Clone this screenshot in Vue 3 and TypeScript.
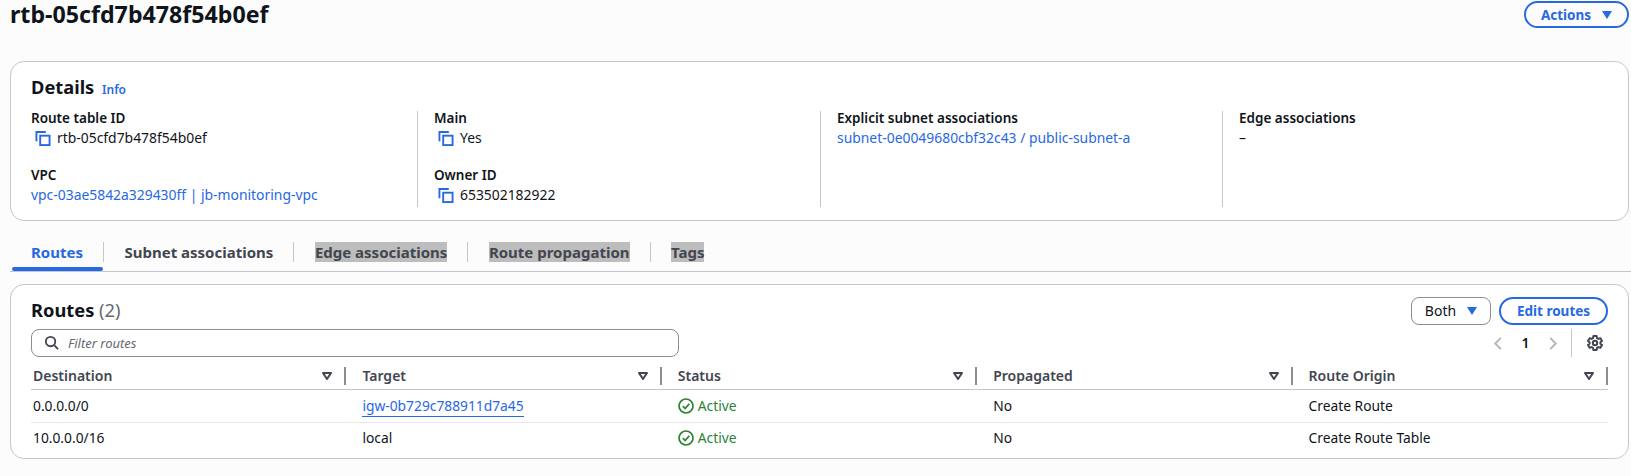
<script setup lang="ts">
type Field = { label: string; value: string; copy?: boolean; link?: boolean }

const detail_cols: Field[][] = [
    [
        { label: 'Route table ID', value: 'rtb-05cfd7b478f54b0ef', copy: true },
        { label: 'VPC', value: 'vpc-03ae5842a329430ff | jb-monitoring-vpc', link: true },
    ],
    [
        { label: 'Main', value: 'Yes', copy: true },
        { label: 'Owner ID', value: '653502182922', copy: true },
    ],
    [{ label: 'Explicit subnet associations', value: 'subnet-0e0049680cbf32c43 / public-subnet-a', link: true }],
    [{ label: 'Edge associations', value: '–' }],
]

const tabs = [
    { name: 'Routes', active: true },
    { name: 'Subnet associations' },
    { name: 'Edge associations', marked: true },
    { name: 'Route propagation', marked: true },
    { name: 'Tags', marked: true },
]

const columns = ['Destination', 'Target', 'Status', 'Propagated', 'Route Origin']

const rows = [
    { dest: '0.0.0.0/0', target: 'igw-0b729c788911d7a45', link: true, origin: 'Create Route' },
    { dest: '10.0.0.0/16', target: 'local', link: false, origin: 'Create Route Table' },
]
</script>

<template>
    <div id="page">
        <header class="head">
            <h1>rtb-05cfd7b478f54b0ef</h1>
            <button class="btn actions">Actions <span class="caret"></span></button>
        </header>

        <section class="card details">
            <h2>Details <a class="info">Info</a></h2>
            <div class="detail-grid">
                <div v-for="(col, i) in detail_cols" :key="i" class="detail-col">
                    <div v-for="field in col" :key="field.label" class="field">
                        <div class="label">{{ field.label }}</div>
                        <div class="value" :class="{ link: field.link }">
                            <svg v-if="field.copy" class="copy" viewBox="0 0 16 16" fill="none" stroke="currentColor" stroke-width="2">
                                <path d="M1 11V1h10" />
                                <rect x="5" y="5" width="10" height="10" />
                            </svg>
                            {{ field.value }}
                        </div>
                    </div>
                </div>
            </div>
        </section>

        <nav class="tabs">
            <div v-for="tab in tabs" :key="tab.name" class="tab" :class="{ active: tab.active }">
                <span :class="{ marked: tab.marked }">{{ tab.name }}</span>
            </div>
        </nav>

        <section class="card routes">
            <div class="routes-top">
                <div class="routes-left">
                    <h2>Routes <span class="count">(2)</span></h2>
                    <div class="filter">
                        <svg class="search" viewBox="0 0 16 16" fill="none" stroke="currentColor" stroke-width="2">
                            <circle cx="7" cy="7" r="5" />
                            <path d="M11 11l4 4" />
                        </svg>
                        <span>Filter routes</span>
                    </div>
                </div>
                <div class="routes-right">
                    <div class="buttons">
                        <button class="btn both">Both <span class="caret"></span></button>
                        <button class="btn edit">Edit routes</button>
                    </div>
                    <div class="pager">
                        <svg class="chev" viewBox="0 0 10 16" fill="none" stroke="currentColor" stroke-width="2"><path d="M8 2L2 8l6 6" /></svg>
                        <span class="page-num">1</span>
                        <svg class="chev" viewBox="0 0 10 16" fill="none" stroke="currentColor" stroke-width="2"><path d="M2 2l6 6-6 6" /></svg>
                        <div class="gear-wrap">
                            <svg class="gear" viewBox="0 0 16 16" fill="none" stroke="currentColor" stroke-width="2" stroke-linejoin="round">
                                <path d="M6.4 1h3.2l.4 2.1 1.4.8 2-.7 1.6 2.8-1.6 1.3v1.4l1.6 1.3-1.6 2.8-2-.7-1.4.8-.4 2.1H6.4L6 12.9l-1.4-.8-2 .7L1 10l1.6-1.3V7.3L1 6l1.6-2.8 2 .7L6 3.1z" />
                                <circle cx="8" cy="8" r="2.2" />
                            </svg>
                        </div>
                    </div>
                </div>
            </div>

            <div class="table">
                <div class="tr th">
                    <div v-for="col in columns" :key="col" class="cell">
                        {{ col }}
                        <svg class="sort" viewBox="0 0 10 8" fill="none" stroke="currentColor" stroke-width="2" stroke-linejoin="round">
                            <path d="M1 1h8L5 7z" />
                        </svg>
                    </div>
                </div>
                <div v-for="row in rows" :key="row.dest" class="tr td">
                    <div class="cell">{{ row.dest }}</div>
                    <div class="cell"><a v-if="row.link" class="under">{{ row.target }}</a><template v-else>{{ row.target }}</template></div>
                    <div class="cell status">
                        <svg class="ok" viewBox="0 0 16 16" fill="none" stroke="currentColor" stroke-width="1.7">
                            <circle cx="8" cy="8" r="7" />
                            <path d="M4.8 8.2l2.3 2.3 4.2-4.6" />
                        </svg>
                        Active
                    </div>
                    <div class="cell">No</div>
                    <div class="cell">{{ row.origin }}</div>
                </div>
            </div>
        </section>
    </div>
</template>

<style>
html, body {
    background: #fcfcfc;
}
</style>

<style scoped>
#page {
    width: 1631px;
    height: 476px;
    overflow: hidden;
    box-sizing: border-box;
    padding: 0 2px 0 10px;
    font-family: "Noto Sans", sans-serif;
    font-size: 14px;
    line-height: 20px;
    color: #0f141a;
}

.head {
    display: flex;
    justify-content: space-between;
    align-items: flex-start;
    height: 61px;
}

h1 {
    margin: 0;
    font-size: 23.2px;
    line-height: 28px;
    font-weight: 700;
}

h2 {
    margin: 0;
    font-size: 18.3px;
    line-height: 24px;
    font-weight: 700;
}

.btn {
    font: inherit;
    font-size: 13.5px;
    font-weight: 700;
    height: 27px;
    padding: 0;
    background: none;
    border: 2px solid #2768e3;
    border-radius: 14px;
    color: #2768e3;
    display: flex;
    align-items: center;
    justify-content: center;
}

.actions {
    margin-top: 1px;
    width: 105px;
    gap: 11px;
}

.caret {
    width: 0;
    height: 0;
    border-left: 5px solid transparent;
    border-right: 5px solid transparent;
    border-top: 8px solid #2768e3;
}

.card {
    box-sizing: border-box;
    background: #fff;
    border: 1px solid #c6c6cd;
    border-radius: 14px;
}

.details {
    height: 160px;
    padding: 13px 20px 0;
}

.info {
    margin-left: 3px;
    font-size: 12px;
    font-weight: 600;
    color: #2768e3;
}

.detail-grid {
    margin-top: 9px;
    display: grid;
    grid-template-columns: 386px 403px 402px 1fr;
    height: 96px;
}

.detail-col {
    padding-left: 16px;
    border-left: 1px solid #c6c6cd;
    display: flex;
    flex-direction: column;
    gap: 20px;
}

.detail-col:first-child {
    padding-left: 0;
    border-left: none;
}

.field {
    margin-top: -3px;
}

.label {
    font-size: 13.5px;
    font-weight: 600;
}

.value {
    display: flex;
    align-items: center;
    font-size: 13.9px;
}

.link {
    color: #2768e3;
}

.copy {
    width: 16px;
    height: 15px;
    margin: 0 6px 0 4px;
    color: #2768e3;
}

.tabs {
    margin-top: 21px;
    height: 29px;
    margin-right: -2px;
    display: flex;
    align-items: flex-start;
    border-bottom: 1px solid #c6c6cd;
}

.tab {
    position: relative;
    padding: 0 20px 0 21.5px;
    height: 29px;
    font-size: 15px;
    font-weight: 700;
    color: #424650;
}

.tab + .tab::before {
    content: "";
    position: absolute;
    left: 0;
    top: 0;
    height: 20px;
    border-left: 1px solid #c6c6cd;
}

.tab.active {
    padding-left: 21px;
    color: #2768e3;
}

.tab.active::after {
    content: "";
    position: absolute;
    left: 2px;
    right: 0;
    bottom: 0;
    height: 4px;
    border-radius: 2px;
    background: #2768e3;
}

.marked {
    background: #bdbdbd;
}

.routes {
    margin-top: 12px;
    height: 175px;
    padding: 12px 20px 0;
}

.routes-top {
    display: flex;
    justify-content: space-between;
}

.routes-left {
    width: 648px;
}

.routes-left h2 {
    line-height: 26px;
}

.count {
    font-weight: 400;
    color: #656871;
}

.filter {
    margin-top: 6px;
    height: 28px;
    box-sizing: border-box;
    border: 1px solid #8c8c94;
    border-radius: 8px;
    display: flex;
    align-items: center;
    padding: 0 0 1px 12px;
    gap: 9px;
    font-style: italic;
    font-size: 13px;
    color: #656871;
}

.search {
    width: 15px;
    height: 15px;
    color: #424650;
}

.routes-right {
    width: 197px;
}

.buttons {
    display: flex;
    gap: 8px;
}

.both {
    width: 80px;
    height: 28px;
    gap: 11px;
    font-size: 14px;
    font-weight: 400;
    color: #0f141a;
    border: 1px solid #8c8c94;
    border-radius: 8px;
}

.edit {
    width: 109px;
    height: 28px;
}

.pager {
    margin-top: 4px;
    height: 28px;
    display: flex;
    align-items: center;
    padding-left: 82px;
}

.chev {
    width: 10px;
    height: 15px;
    color: #b4b4bb;
}

.page-num {
    width: 45px;
    text-align: center;
    font-weight: 600;
}

.gear-wrap {
    margin-left: 13px;
    height: 28px;
    padding-left: 15px;
    border-left: 1px solid #c6c6cd;
    display: flex;
    align-items: center;
}

.gear {
    width: 16px;
    height: 16px;
    color: #424650;
}

.table {
    margin-top: 6px;
}

.tr {
    display: grid;
    grid-template-columns: repeat(5, 1fr);
}

.cell {
    position: relative;
    padding-left: 16px;
    display: flex;
    align-items: center;
}

.cell:first-child {
    padding-left: 2px;
}

.th {
    height: 27px;
    padding-bottom: 1px;
    border-bottom: 1px solid #c6c6cd;
    box-sizing: border-box;
    font-weight: 600;
    color: #424650;
    font-size: 14px;
}

.sort {
    position: absolute;
    right: 14px;
    top: 9px;
    width: 10px;
    height: 8px;
}

.th .cell::after {
    content: "";
    position: absolute;
    right: 0;
    top: 4px;
    height: 18px;
    border-right: 2px solid #8c8c94;
}

.td {
    height: 32px;
    box-sizing: border-box;
    font-size: 13.8px;
}

.td + .td {
    height: 33px;
    border-top: 1px solid #e8e8ea;
    padding-bottom: 3px;
}

.under {
    color: #2768e3;
    border-bottom: 1px solid #2768e3;
}

.status {
    color: #2a8436;
    gap: 4px;
}

.ok {
    width: 16px;
    height: 16px;
}
</style>
